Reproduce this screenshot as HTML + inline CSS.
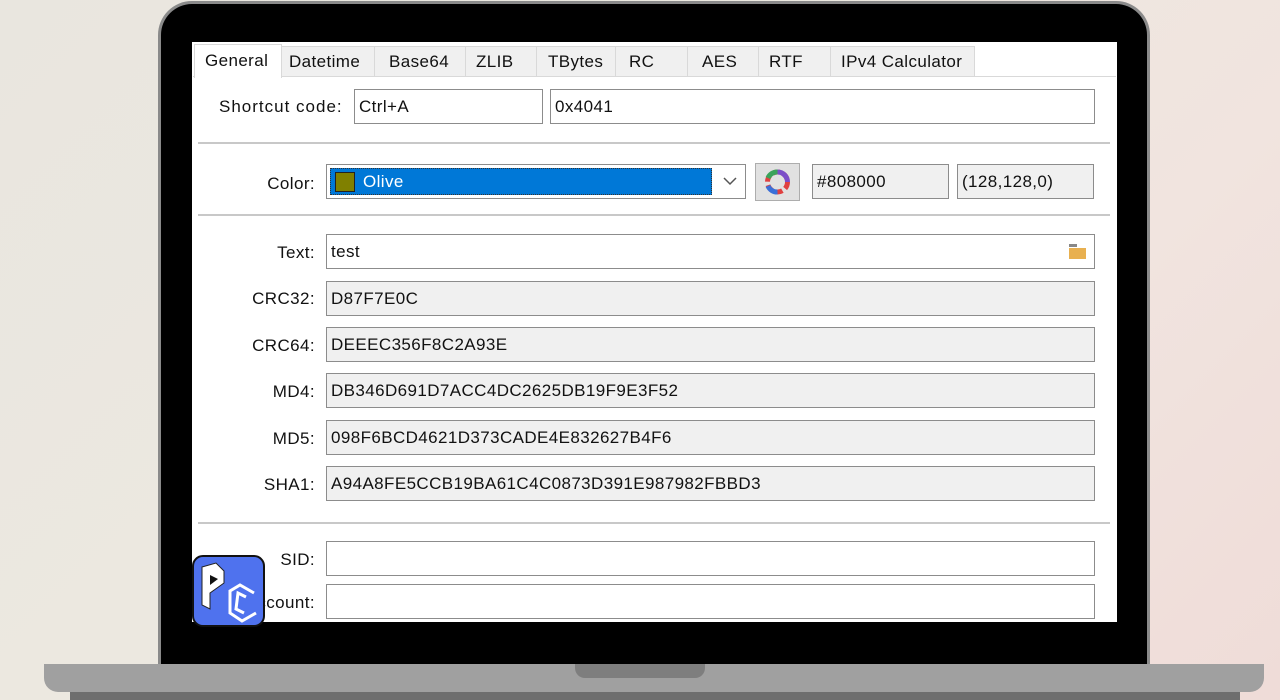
<!DOCTYPE html>
<html><head><style>
*{box-sizing:border-box;margin:0;padding:0}
body{width:1280px;height:700px;overflow:hidden;position:relative;font-family:"Liberation Sans",sans-serif;font-size:17px;letter-spacing:0.4px;color:#111;
background:linear-gradient(135deg,#e9e6df 0%,#ece8e0 40%,#f1e4df 70%,#efdcd8 100%)}
.abs{position:absolute}
.bezel{left:158px;top:1px;width:992px;height:668px;background:#000;border:3px solid #8a8a8a;border-bottom:none;border-radius:34px 34px 0 0}
.screen{left:192px;top:42px;width:925px;height:580px;background:#fff}
.base{left:44px;top:664px;width:1220px;height:28px;background:#a0a0a0;border-radius:0 0 14px 14px}
.base2{left:70px;top:692px;width:1170px;height:8px;background:#6e6e6e}
.notch{left:575px;top:664px;width:130px;height:14px;background:#7e7e7e;border-radius:0 0 10px 10px}
.tab{top:46px;height:30px;background:#f0f0f0;border:1px solid #d9d9d9;border-bottom:none;padding:5px 0 0 7px;font-size:17px}
.tab.act{background:#fff;top:44px;height:34px;border-color:#d9d9d9}
.box{height:35px;border:1px solid #8c8c8c;background:#fff;padding:7px 0 0 4px;font-size:17px}
.gray{background:#f0f0f0}
.lbl{width:120px;text-align:right;left:195px;font-size:17px}
.sep{left:198px;width:912px;height:2px;background:#c8c8c8}
</style></head><body>
<div class="abs bezel"></div>
<div class="abs screen"></div>
<div class="abs base"></div><div class="abs base2"></div><div class="abs notch"></div>
<div class="abs" style="left:193px;top:76px;width:923px;height:1px;background:#d9d9d9"></div>
<div class="abs tab act" style="left:194px;width:88px;padding-top:6px;padding-left:10px">General</div>
<div class="abs tab" style="left:281px;width:94px">Datetime</div>
<div class="abs tab" style="left:374px;width:92px;padding-left:14px">Base64</div>
<div class="abs tab" style="left:465px;width:72px;padding-left:10px">ZLIB</div>
<div class="abs tab" style="left:536px;width:80px;padding-left:11px">TBytes</div>
<div class="abs tab" style="left:615px;width:73px;padding-left:13px">RC</div>
<div class="abs tab" style="left:687px;width:72px;padding-left:14px">AES</div>
<div class="abs tab" style="left:758px;width:73px;padding-left:10px">RTF</div>
<div class="abs tab" style="left:830px;width:145px;padding-left:10px">IPv4 Calculator</div>

<div class="abs" style="left:219px;top:97px;letter-spacing:1px">Shortcut code:</div>
<div class="abs box" style="left:354px;top:89px;width:189px">Ctrl+A</div>
<div class="abs box" style="left:550px;top:89px;width:545px">0x4041</div>
<div class="abs sep" style="top:142px"></div>

<div class="abs lbl" style="top:174px">Color:</div>
<div class="abs box" style="left:326px;top:164px;width:420px;padding:3px"><div style="height:27px;background:#0078d7;border:1px dotted #333;position:relative;width:382px"><div class="abs" style="left:4px;top:3px;width:20px;height:20px;background:#808000;border:1px solid #222"></div><span class="abs" style="left:32px;top:3px;color:#fff">Olive</span></div><svg class="abs" style="right:8px;top:12px" width="14" height="9"><path d="M1 1L7 7L13 1" stroke="#555" fill="none" stroke-width="1.5"/></svg></div>
<div class="abs" style="left:755px;top:163px;width:45px;height:38px;background:#e1e1e1;border:1px solid #adadad">
<svg width="43" height="36" viewBox="0 0 43 36"><g fill="none" stroke-width="5"><circle cx="21.5" cy="18" r="10" stroke="#e04040" stroke-dasharray="7 3.5"/><path d="M21.5 8A10 10 0 0 1 31.5 18" stroke="#7b4ec8"/><path d="M12 14A10 10 0 0 1 21.5 8" stroke="#3aa35a"/><path d="M21.5 28A10 10 0 0 1 12 22" stroke="#3a6fd8"/></g></svg></div>
<div class="abs box gray" style="left:812px;top:164px;width:137px">#808000</div>
<div class="abs box gray" style="left:957px;top:164px;width:137px">(128,128,0)</div>
<div class="abs sep" style="top:214px"></div>

<div class="abs lbl" style="top:243px">Text:</div>
<div class="abs box" style="left:326px;top:234px;width:769px">test<div class="abs" style="right:8px;top:9px;width:17px;height:15px"><div style="width:8px;height:3px;background:#888"></div><div style="width:17px;height:11px;background:#e8b050;margin-top:1px"></div></div></div>
<div class="abs lbl" style="top:289px">CRC32:</div>
<div class="abs box gray" style="left:326px;top:281px;width:769px">D87F7E0C</div>
<div class="abs lbl" style="top:336px">CRC64:</div>
<div class="abs box gray" style="left:326px;top:327px;width:769px">DEEEC356F8C2A93E</div>
<div class="abs lbl" style="top:382px">MD4:</div>
<div class="abs box gray" style="left:326px;top:373px;width:769px">DB346D691D7ACC4DC2625DB19F9E3F52</div>
<div class="abs lbl" style="top:429px">MD5:</div>
<div class="abs box gray" style="left:326px;top:420px;width:769px">098F6BCD4621D373CADE4E832627B4F6</div>
<div class="abs lbl" style="top:475px">SHA1:</div>
<div class="abs box gray" style="left:326px;top:466px;width:769px">A94A8FE5CCB19BA61C4C0873D391E987982FBBD3</div>
<div class="abs sep" style="top:522px"></div>
<div class="abs lbl" style="top:550px">SID:</div>
<div class="abs box" style="left:326px;top:541px;width:769px"></div>
<div class="abs lbl" style="top:593px">Account:</div>
<div class="abs box" style="left:326px;top:584px;width:769px"></div>

<div class="abs" style="left:192px;top:555px;width:73px;height:72px;background:#4f72ee;border:2px solid #111;border-radius:11px;overflow:hidden">
<svg width="70" height="70" viewBox="0 0 70 70"><path d="M8 10L22 6L30 14L30 26L16 36L16 52L8 48Z" fill="#fff" stroke="#222" stroke-width="1"/><path d="M16 18L24 22L16 28Z" fill="#111"/><g fill="none" stroke="#fff" stroke-width="3"><path d="M60 36L46 28L36 34L36 56L48 64L62 56"/><path d="M52 40L44 36L42 52L50 56"/></g></svg></div>
</body></html>
